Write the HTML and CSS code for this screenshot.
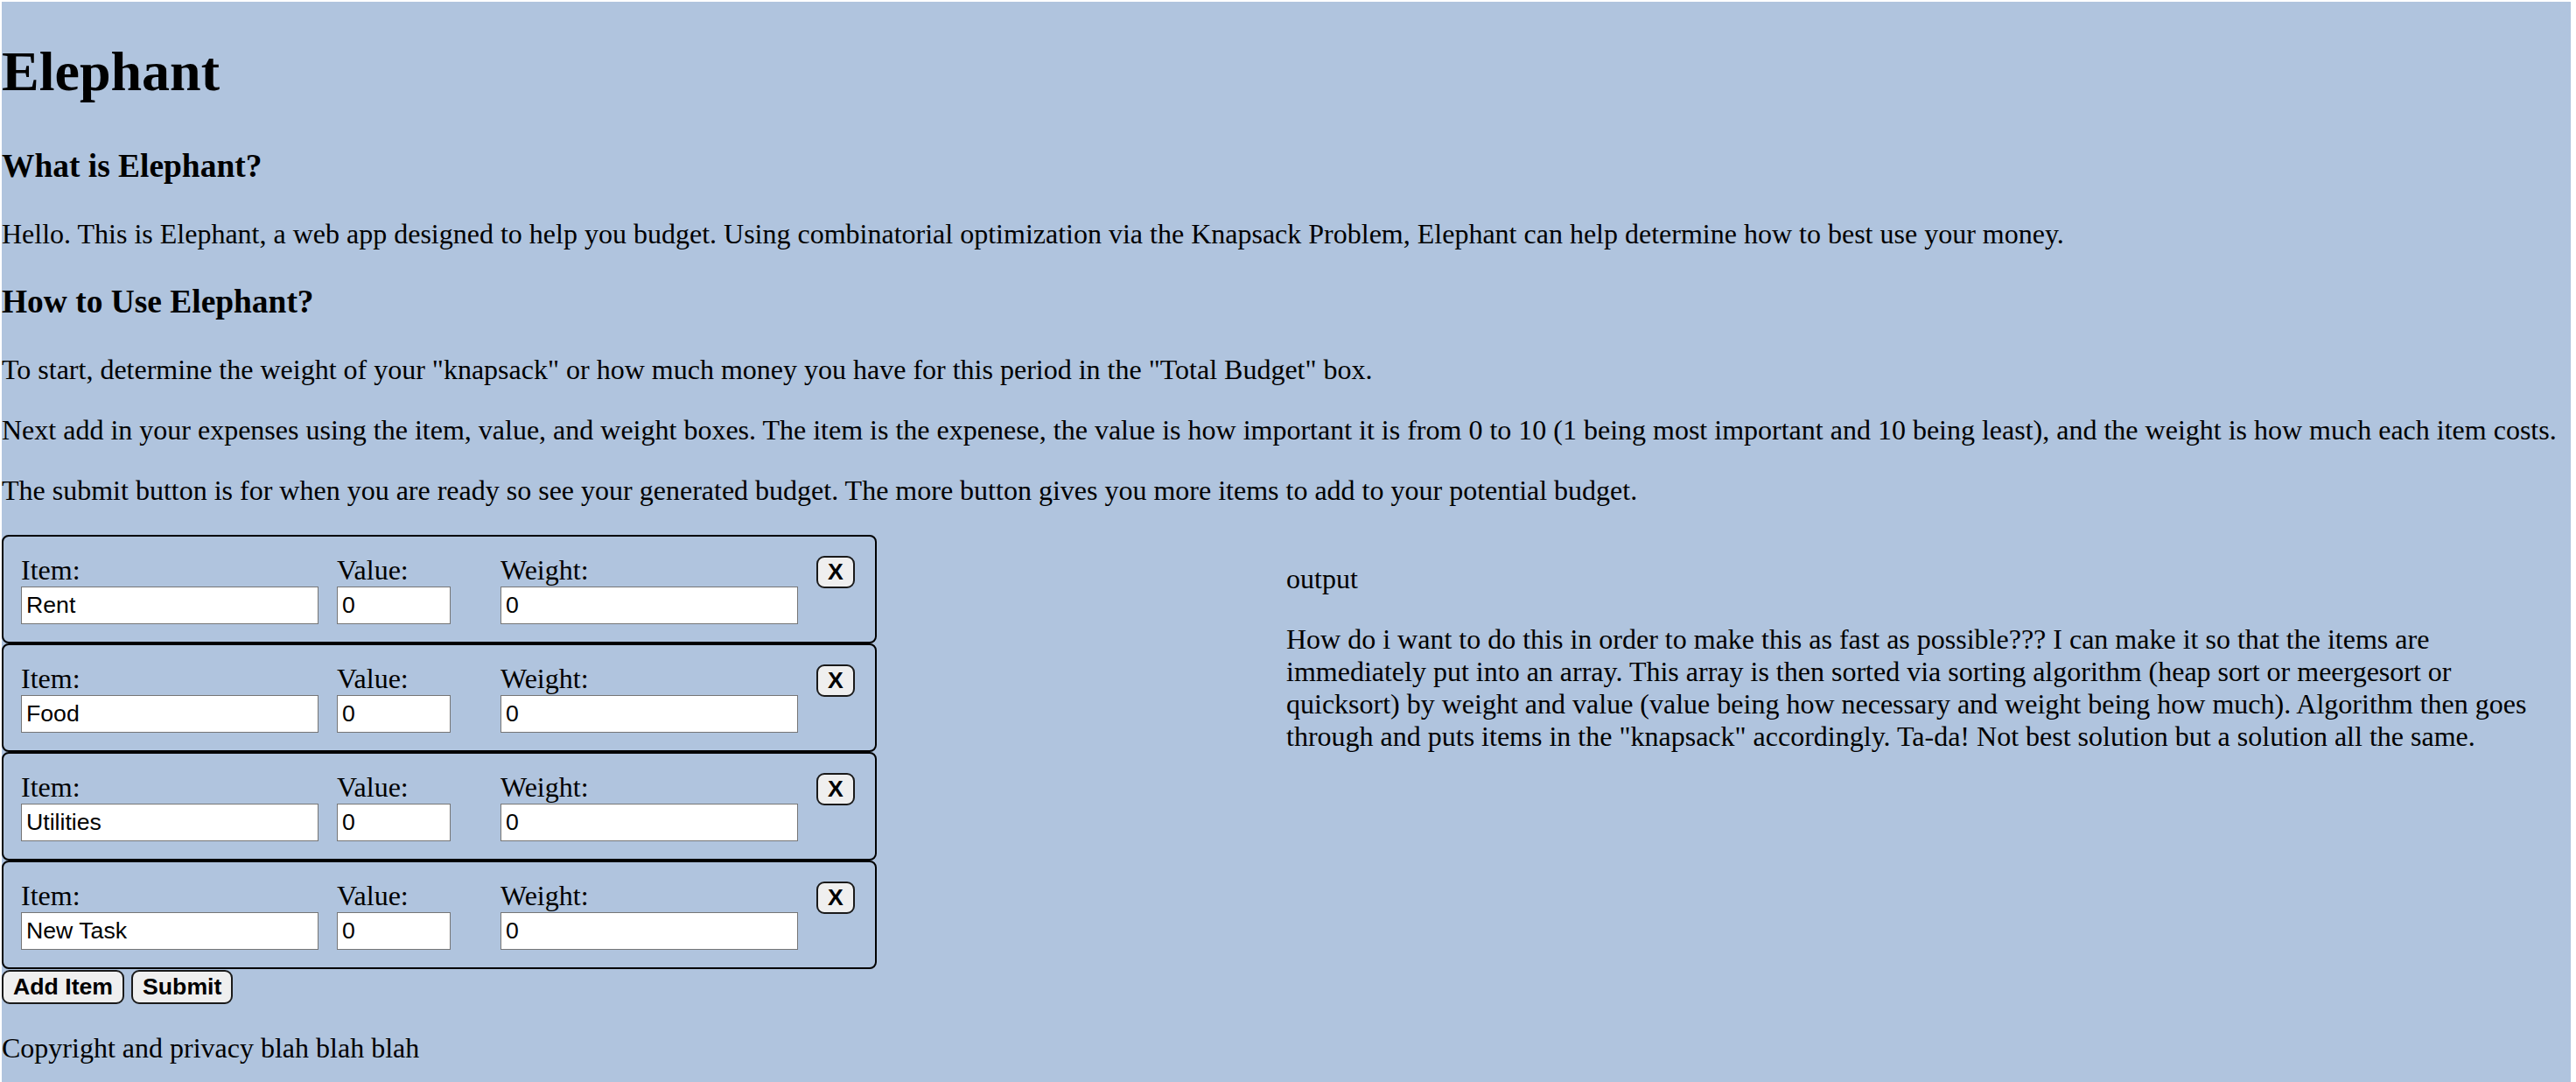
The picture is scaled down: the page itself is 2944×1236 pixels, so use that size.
FILE: index.html
```html
<!DOCTYPE html>
<html lang="en">
<head>
<meta charset="utf-8">
<title>Elephant</title>
<link rel="stylesheet" href="styles.css">
</head>
<body>
<h1 class="title">Elephant</h1>
<h3 class="subtitle">What is Elephant?</h3>
<p class="text">Hello. This is Elephant, a web app designed to help you budget. Using combinatorial optimization via the Knapsack Problem, Elephant can help determine how to best use your money.</p>
<h3 class="subtitle">How to Use Elephant?</h3>
<p class="text">To start, determine the weight of your "knapsack" or how much money you have for this period in the "Total Budget" box.</p>
<p class="text">Next add in your expenses using the item, value, and weight boxes. The item is the expenese, the value is how important it is from 0 to 10 (1 being most important and 10 being least), and the weight is how much each item costs.</p>
<p class="text">The submit button is for when you are ready so see your generated budget. The more button gives you more items to add to your potential budget.</p>
<div class="main">
  <div class="left">
    <div class="cards">
      <div class="card">
        <div class="field field-item"><label class="lbl">Item:</label><input class="inp inp-item" type="text" value="Rent"></div>
        <div class="field field-value"><label class="lbl">Value:</label><input class="inp inp-value" type="text" value="0"></div>
        <div class="field field-weight"><label class="lbl">Weight:</label><input class="inp inp-weight" type="text" value="0"></div>
        <button class="btn btn-x" type="button">X</button>
      </div>
      <div class="card">
        <div class="field field-item"><label class="lbl">Item:</label><input class="inp inp-item" type="text" value="Food"></div>
        <div class="field field-value"><label class="lbl">Value:</label><input class="inp inp-value" type="text" value="0"></div>
        <div class="field field-weight"><label class="lbl">Weight:</label><input class="inp inp-weight" type="text" value="0"></div>
        <button class="btn btn-x" type="button">X</button>
      </div>
      <div class="card">
        <div class="field field-item"><label class="lbl">Item:</label><input class="inp inp-item" type="text" value="Utilities"></div>
        <div class="field field-value"><label class="lbl">Value:</label><input class="inp inp-value" type="text" value="0"></div>
        <div class="field field-weight"><label class="lbl">Weight:</label><input class="inp inp-weight" type="text" value="0"></div>
        <button class="btn btn-x" type="button">X</button>
      </div>
      <div class="card">
        <div class="field field-item"><label class="lbl">Item:</label><input class="inp inp-item" type="text" value="New Task"></div>
        <div class="field field-value"><label class="lbl">Value:</label><input class="inp inp-value" type="text" value="0"></div>
        <div class="field field-weight"><label class="lbl">Weight:</label><input class="inp inp-weight" type="text" value="0"></div>
        <button class="btn btn-x" type="button">X</button>
      </div>
    </div>
    <div class="actions"><button class="btn" type="button">Add Item</button> <button class="btn" type="button">Submit</button></div>
  </div>
  <div class="right">
    <p class="text">output</p>
    <p class="text">How do i want to do this in order to make this as fast as possible??? I can make it so that the items are immediately put into an array. This array is then sorted via sorting algorithm (heap sort or meergesort or quicksort) by weight and value (value being how necessary and weight being how much). Algorithm then goes through and puts items in the "knapsack" accordingly. Ta-da! Not best solution but a solution all the same.</p>
  </div>
</div>
<p class="text footer">Copyright and privacy blah blah blah</p>
</body>
</html>
```

FILE: styles.css
```css
html {
  background: #ffffff;
}

body {
  margin: 2px 6px 0 2px;
  background: #b0c4de;
  display: flow-root;
  min-height: calc(100vh - 2px);
  font-family: "Liberation Serif", "Times New Roman", serif;
  font-size: 32px;
  color: #000;
}

.title {
  font-size: 64px;
  font-weight: bold;
  margin: 42.88px 0 49.6px;
}

.subtitle {
  font-size: 37.44px;
  font-weight: bold;
  margin: 37.44px 0;
}

.text {
  margin: 32px 0;
}

.footer {
  margin-bottom: 0;
}

.main {
  display: flex;
}

.left,
.right {
  flex: 1 1 0;
  min-width: 0;
}

.card {
  box-sizing: border-box;
  width: 1000px;
  border: 2px solid #000;
  border-radius: 8px;
  padding: 20px;
  display: flex;
  align-items: baseline;
}

.field {
  display: flex;
  flex-direction: column;
  margin-right: 21px;
}

.field-item {
  width: 340px;
}

.field-value {
  width: 166px;
}

.field-weight {
  width: 340px;
}

.lbl {
  display: block;
}

.inp {
  box-sizing: border-box;
  height: 43px;
  border: 1px solid #767676;
  background: #fff;
  padding: 0 5px;
  margin: 0;
  font-family: "Liberation Sans", Arial, sans-serif;
  font-size: 26.67px;
  color: #000;
}

.inp-item,
.inp-weight {
  width: 340px;
}

.inp-value {
  width: 130px;
}

.btn {
  font-family: "Liberation Sans", Arial, sans-serif;
  font-size: 26.67px;
  font-weight: bold;
  color: #000;
  background: #efefef;
  border: 2px solid #1a1a1a;
  border-radius: 9px;
  padding: 2px 11px;
  margin: 0;
}

.btn-x {
  padding: 1px 11px;
}
```
